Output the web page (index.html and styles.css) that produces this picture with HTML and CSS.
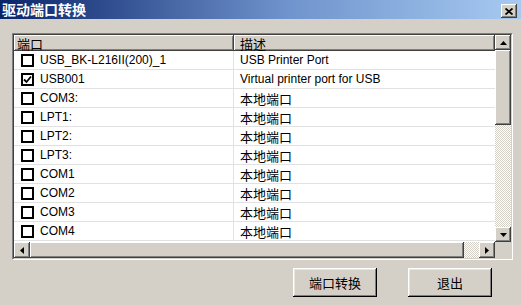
FILE: index.html
```html
<!DOCTYPE html>
<html lang="zh-CN">
<head>
    <meta charset="UTF-8">
    <title>驱动端口转换</title>
    <link rel="stylesheet" href="styles.css">
</head>
<body>
    <div class="window">
        <div class="titlebar">
            <span class="title">驱动端口转换</span>
            <div class="close-btn">
                <svg width="8" height="7" viewBox="0 0 8 7"><path d="M0.5 0.5 L7.5 6.5 M7.5 0.5 L0.5 6.5" stroke="#000" stroke-width="1.8"/></svg>
            </div>
        </div>

        <div class="dialog-body">
            <div class="list-frame">
                <div class="listview">
                    <div class="view">
                        <div class="header">
                            <div class="hcell col-port cn">端口</div>
                            <div class="hcell col-desc cn">描述</div>
                        </div>
                        <div class="row">
                            <div class="cell col-port"><span class="check"></span>USB_BK-L216II(200)_1</div>
                            <div class="cell col-desc">USB Printer Port</div>
                        </div>
                        <div class="row">
                            <div class="cell col-port"><span class="check checked"><svg width="9" height="9" viewBox="0 0 9 9"><path d="M1 4.5 L3.5 7 L8 1.5" fill="none" stroke="#000" stroke-width="1.8"/></svg></span>USB001</div>
                            <div class="cell col-desc">Virtual printer port for USB</div>
                        </div>
                        <div class="row">
                            <div class="cell col-port"><span class="check"></span>COM3:</div>
                            <div class="cell col-desc cn">本地端口</div>
                        </div>
                        <div class="row">
                            <div class="cell col-port"><span class="check"></span>LPT1:</div>
                            <div class="cell col-desc cn">本地端口</div>
                        </div>
                        <div class="row">
                            <div class="cell col-port"><span class="check"></span>LPT2:</div>
                            <div class="cell col-desc cn">本地端口</div>
                        </div>
                        <div class="row">
                            <div class="cell col-port"><span class="check"></span>LPT3:</div>
                            <div class="cell col-desc cn">本地端口</div>
                        </div>
                        <div class="row">
                            <div class="cell col-port"><span class="check"></span>COM1</div>
                            <div class="cell col-desc cn">本地端口</div>
                        </div>
                        <div class="row">
                            <div class="cell col-port"><span class="check"></span>COM2</div>
                            <div class="cell col-desc cn">本地端口</div>
                        </div>
                        <div class="row">
                            <div class="cell col-port"><span class="check"></span>COM3</div>
                            <div class="cell col-desc cn">本地端口</div>
                        </div>
                        <div class="row">
                            <div class="cell col-port"><span class="check"></span>COM4</div>
                            <div class="cell col-desc cn">本地端口</div>
                        </div>
                    </div>

                    <!-- vertical scrollbar -->
                    <div class="vscroll">
                        <div class="sbtn vbtn"><svg width="7" height="4" viewBox="0 0 7 4"><polygon points="3.5,0 7,4 0,4" fill="#000"/></svg></div>
                        <div class="thumb vthumb"></div>
                        <div class="track"></div>
                        <div class="sbtn vbtn"><svg width="7" height="4" viewBox="0 0 7 4"><polygon points="0,0 7,0 3.5,4" fill="#000"/></svg></div>
                    </div>

                    <!-- horizontal scrollbar -->
                    <div class="hscroll">
                        <div class="sbtn hbtn"><svg width="4" height="7" viewBox="0 0 4 7"><polygon points="4,0 4,7 0,3.5" fill="#000"/></svg></div>
                        <div class="thumb hthumb"></div>
                        <div class="track"></div>
                        <div class="sbtn hbtn"><svg width="4" height="7" viewBox="0 0 4 7"><polygon points="0,0 4,3.5 0,7" fill="#000"/></svg></div>
                    </div>
                    <div class="corner"></div>
                </div>
            </div>

            <div class="actions">
                <button class="btn">端口转换</button>
                <button class="btn">退出</button>
            </div>
        </div>
    </div>
</body>
</html>
```

FILE: styles.css
```css
body {
    margin: 0;
    font-family: "Liberation Sans", "Noto Sans CJK SC", sans-serif;
    font-size: 12px;
    color: #000;
    background: #d4d0c8;
}

.window {
    width: 521px;
    height: 305px;
    background: #d4d0c8;
    overflow: hidden;
}

.titlebar {
    height: 19px;
    display: flex;
    align-items: center;
    justify-content: space-between;
    padding: 0 4px 0 2px;
    background: linear-gradient(to right, #0a246a, #6f93cc 55%, #a6caf0);
}

.title {
    color: #fff;
    font-family: "Noto Sans CJK SC", sans-serif;
    font-weight: bold;
    font-size: 14px;
    line-height: 19px;
}

.close-btn {
    width: 16px;
    height: 14px;
    margin-top: 3px;
    display: flex;
    align-items: center;
    justify-content: center;
    background: #d4d0c8;
    box-shadow: inset -1px -1px #404040, inset 1px 1px #fff, inset -2px -2px #808080;
}

.dialog-body {
    padding: 14px 0 0 12px;
}

.cn {
    font-family: "Noto Sans CJK SC", sans-serif;
    font-size: 13px;
}

/* sunken list box */
.list-frame {
    width: 501px;
    height: 227px;
    box-sizing: border-box;
    border: 1px solid;
    border-color: #808080 #fff #fff #808080;
}

.listview {
    height: 100%;
    box-sizing: border-box;
    border: 1px solid;
    border-color: #404040 #d4d0c8 #d4d0c8 #404040;
    display: grid;
    grid-template-columns: 1fr 16px;
    grid-template-rows: 1fr 16px;
    background: #fff;
}

.view {
    overflow: hidden;
}

.header {
    display: flex;
    height: 16px;
}

.hcell {
    box-sizing: border-box;
    height: 16px;
    display: flex;
    align-items: center;
    line-height: 1;
    background: #d4d0c8;
    box-shadow: inset -1px -1px #404040, inset 1px 1px #fff, inset -2px -2px #808080;
    white-space: nowrap;
}

.header .col-port {
    padding-left: 3px;
}

.col-port {
    width: 220px;
    flex: none;
}

.col-desc {
    flex: 1;
    padding-left: 6px;
}

.row {
    display: flex;
    height: 19px;
    box-sizing: border-box;
    border-bottom: 1px solid #e1e1e1;
}

.cell {
    display: flex;
    align-items: center;
    white-space: nowrap;
}

.row .col-port {
    box-sizing: border-box;
    border-right: 1px solid #e1e1e1;
}

.check {
    width: 13px;
    height: 13px;
    box-sizing: border-box;
    border: 2px solid #000;
    background: #fff;
    margin: 0 6px 0 7px;
    display: flex;
    align-items: center;
    justify-content: center;
}

/* scrollbars */
.vscroll {
    display: flex;
    flex-direction: column;
}

.hscroll {
    display: flex;
}

.sbtn,
.thumb,
.corner {
    background: #d4d0c8;
}

.sbtn,
.thumb {
    box-sizing: border-box;
    box-shadow: inset -1px -1px #404040, inset 1px 1px #fff, inset -2px -2px #808080;
}

.sbtn {
    display: flex;
    align-items: center;
    justify-content: center;
}

.vbtn {
    height: 15px;
}

.hbtn {
    width: 16px;
}

.vthumb {
    height: 75px;
}

.hthumb {
    width: 434px;
}

.track {
    flex: 1;
    background: repeating-conic-gradient(#fff 0 25%, #d4d0c8 0 50%) 0 0 / 2px 2px;
}

/* buttons */
.actions {
    display: flex;
    justify-content: flex-end;
    gap: 31px;
    padding-right: 29px;
    margin-top: 8px;
}

.btn {
    width: 84px;
    height: 29px;
    border: none;
    background: #d4d0c8;
    font-family: "Noto Sans CJK SC", sans-serif;
    font-size: 13px;
    color: #000;
    box-shadow: inset -1px -1px #000, inset 1px 1px #fff, inset -2px -2px #808080, inset 2px 2px #e8e6e0;
}
```
